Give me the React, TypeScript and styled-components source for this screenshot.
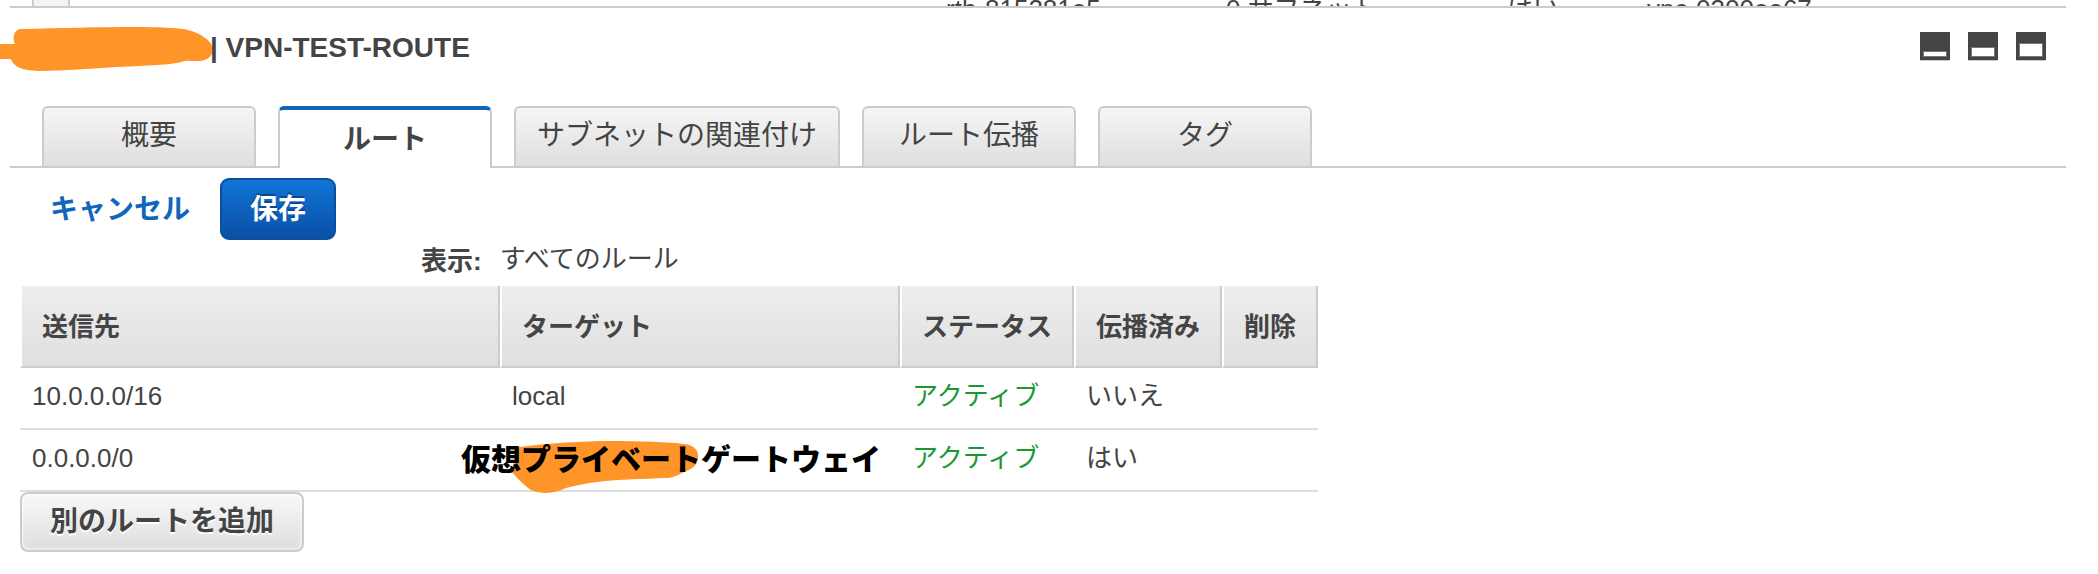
import React from "react";
import styled, { createGlobalStyle, css } from "styled-components";

const Global = createGlobalStyle`
  * { box-sizing: border-box; }
  body {
    margin: 0;
    background: #fff;
    color: #444;
    font-family: "Liberation Sans", "Noto Sans CJK JP", sans-serif;
    font-size: 26px;
  }
  button { font-family: inherit; cursor: pointer; }
`;

const Page = styled.div`
  padding: 0 32px 20px 10px;
`;

const ListTail = styled.div`
  display: flex;
  height: 8px;
  overflow: hidden;
  border-bottom: 2px solid #ccc;
`;

const HandleCell = styled.div`
  width: 38px;
  margin-left: 22px;
  border: 2px solid #ccc;
  border-width: 0 2px;
  background: #f3f3f3;
`;

const TailText = styled.div<{ $width: number }>`
  flex: none;
  width: ${(p) => p.$width}px;
  margin-top: -7px;
  line-height: 32px;
  white-space: nowrap;
`;

const TailSpacer = styled.div`
  flex: none;
  width: 876px;
`;

const PanelHeader = styled.header`
  display: flex;
  justify-content: space-between;
  align-items: flex-start;
  padding: 24px 20px 0 0;
  height: 98px;
`;

const TitleGroup = styled.div`
  display: flex;
  margin-left: -10px;
`;

const RedactedId = styled.svg`
  flex: none;
  width: 214px;
  height: 50px;
  margin: -8px -4px 0 0;
`;

const Title = styled.h1`
  margin: 0;
  font-size: 28px;
  line-height: 32px;
  font-weight: 700;
`;

const SizeControls = styled.div`
  display: flex;
  gap: 18px;
`;

const SizeButton = styled.button`
  display: block;
  width: 30px;
  height: 29px;
  padding: 0;
  border: 0;
  background: none;
  svg { display: block; }
`;

const Tabs = styled.nav`
  display: flex;
  gap: 22px;
  height: 62px;
  padding-left: 32px;
  border-bottom: 2px solid #ccc;
`;

const Tab = styled.button<{ $active?: boolean }>`
  min-width: 214px;
  height: 60px;
  padding: 0 21px 2px;
  border: 2px solid #ccc;
  border-bottom: 0;
  border-radius: 6px 6px 0 0;
  background: linear-gradient(#f6f6f6, #dedede);
  color: #444;
  font-size: 28px;
  line-height: 40px;
  ${(p) =>
    p.$active &&
    css`
      height: 62px;
      padding: 2px 21px 0;
      border-top: 4px solid #1166bb;
      background: #fff;
      font-weight: 700;
    `}
`;

const Actions = styled.div`
  display: flex;
  align-items: center;
  gap: 30px;
  padding: 10px 0 0 40px;
`;

const CancelLink = styled.a`
  padding-top: 2px;
  color: #1166bb;
  font-size: 28px;
  font-weight: 700;
  line-height: 40px;
  text-decoration: none;
`;

const SaveButton = styled.button`
  height: 62px;
  padding: 2px 28px 0;
  border: 2px solid #0a50a1;
  border-radius: 9px;
  background: linear-gradient(#1174d6, #0a50a5);
  color: #fff;
  font-size: 28px;
  font-weight: 700;
  line-height: 40px;
  text-shadow: 0 -2px 0 #0a4a94;
`;

const Filter = styled.div`
  display: flex;
  gap: 18px;
  height: 46px;
  padding-left: 411px;
  line-height: 38px;
`;

const FilterLabel = styled.span`
  font-weight: 700;
  line-height: 42px;
`;

const Table = styled.table`
  width: 1298px;
  margin-left: 10px;
  border-collapse: separate;
  border-spacing: 0;
  table-layout: fixed;
`;

const HeadCell = styled.th<{ $width: number }>`
  width: ${(p) => p.$width}px;
  height: 82px;
  padding: 2px 0 0 20px;
  border: 2px solid #ccc;
  border-top: 0;
  border-left-color: #fff;
  background: linear-gradient(#eee, #dfdfdf);
  background-clip: padding-box;
  text-align: left;
  line-height: 38px;
  white-space: nowrap;
`;

const Cell = styled.td<{ $ok?: boolean }>`
  position: relative;
  height: 62px;
  padding: 0 0 4px 12px;
  border-bottom: 2px solid #ddd;
  color: ${(p) => (p.$ok ? "#1a9933" : "#444")};
  line-height: 38px;
  white-space: nowrap;
`;

const Marker = styled.svg`
  position: absolute;
  left: 0;
  top: 0;
  width: 210px;
  height: 70px;
  z-index: 1;
`;

const Annotation = styled.span`
  position: absolute;
  left: -39px;
  top: 10px;
  z-index: 2;
  color: #000;
  font-size: 30px;
  font-weight: 900;
  line-height: 40px;
`;

const AddButton = styled.button`
  display: block;
  height: 60px;
  margin-left: 10px;
  padding: 0 28px;
  border: 2px solid #ccc;
  border-radius: 8px;
  background: linear-gradient(#f8f8f8, #dedede);
  box-shadow: inset 0 0 4px #fff;
  color: #444;
  font-size: 28px;
  font-weight: 700;
  line-height: 40px;
  text-shadow: 0 2px 0 #fff;
`;

const sizes = [
  { label: "最小化", top: 20 },
  { label: "標準", top: 16 },
  { label: "最大化", top: 12 },
];

const tabs = ["概要", "ルート", "サブネットの関連付け", "ルート伝播", "タグ"];

const columns = [
  { name: "送信先", width: 480 },
  { name: "ターゲット", width: 400 },
  { name: "ステータス", width: 174 },
  { name: "伝播済み", width: 148 },
  { name: "削除", width: 96 },
];

export default function App() {
  return (
    <>
      <Global />
      <Page>
        <ListTail>
          <HandleCell />
          <TailSpacer />
          <TailText $width={280}>rtb-815281e5</TailText>
          <TailText $width={281}>0 サブネット</TailText>
          <TailText $width={140}>はい</TailText>
          <TailText $width={240}>vpc-0300ee67</TailText>
        </ListTail>
        <PanelHeader>
          <TitleGroup>
            <RedactedId viewBox="0 0 214 50" aria-hidden="true">
              <path
                fill="#ff9428"
                d="M0 20H15C12 14 14 6 20 5C60 4 100 3 133 3C160 3 175 4 184 5C199 8 213 17 213 25C213 32 207 37 199 37C192 37 186 36 181 38C174 40 160 41 140 42C110 43 80 46 43 47C33 47 25 46 20 44C15 42 12 38 11 35H0Z"
              />
            </RedactedId>
            <Title>| VPN-TEST-ROUTE</Title>
          </TitleGroup>
          <SizeControls>
            {sizes.map((s) => (
              <SizeButton key={s.label} aria-label={s.label}>
                <svg width="30" height="29" viewBox="0 0 30 29">
                  <rect width="30" height="28" fill="#444" />
                  <rect y="28" width="30" height="1" fill="#ccc" />
                  <rect x="3.5" y={s.top - 0.5} width="23" height={25 - s.top} fill="#fff" stroke="#777" />
                </svg>
              </SizeButton>
            ))}
          </SizeControls>
        </PanelHeader>
        <Tabs>
          {tabs.map((t) => (
            <Tab key={t} $active={t === "ルート"}>
              {t}
            </Tab>
          ))}
        </Tabs>
        <Actions>
          <CancelLink href="#">キャンセル</CancelLink>
          <SaveButton>保存</SaveButton>
        </Actions>
        <Filter>
          <FilterLabel>表示:</FilterLabel>
          <span>すべてのルール</span>
        </Filter>
        <Table>
          <thead>
            <tr>
              {columns.map((c) => (
                <HeadCell key={c.name} $width={c.width}>
                  {c.name}
                </HeadCell>
              ))}
            </tr>
          </thead>
          <tbody>
            <tr>
              <Cell>10.0.0.0/16</Cell>
              <Cell>local</Cell>
              <Cell $ok>アクティブ</Cell>
              <Cell>いいえ</Cell>
              <Cell />
            </tr>
            <tr>
              <Cell>0.0.0.0/0</Cell>
              <Cell>
                <Marker viewBox="0 0 210 70" aria-hidden="true">
                  <path
                    fill="#ff9428"
                    d="M19 17C40 14 70 12 100 11C140 11 170 12 184 14C194 15 199 20 198 28C197 36 192 39 184 42C176 46 172 48 165 48C145 49 120 49 97 52C82 54 74 56 66 58C58 62 50 63 44 63C36 62 32 61 28 58C21 52 16 47 12 42C14 32 16 25 19 17Z"
                  />
                </Marker>
                <Annotation>仮想プライベートゲートウェイ</Annotation>
              </Cell>
              <Cell $ok>アクティブ</Cell>
              <Cell>はい</Cell>
              <Cell />
            </tr>
          </tbody>
        </Table>
        <AddButton>別のルートを追加</AddButton>
      </Page>
    </>
  );
}
